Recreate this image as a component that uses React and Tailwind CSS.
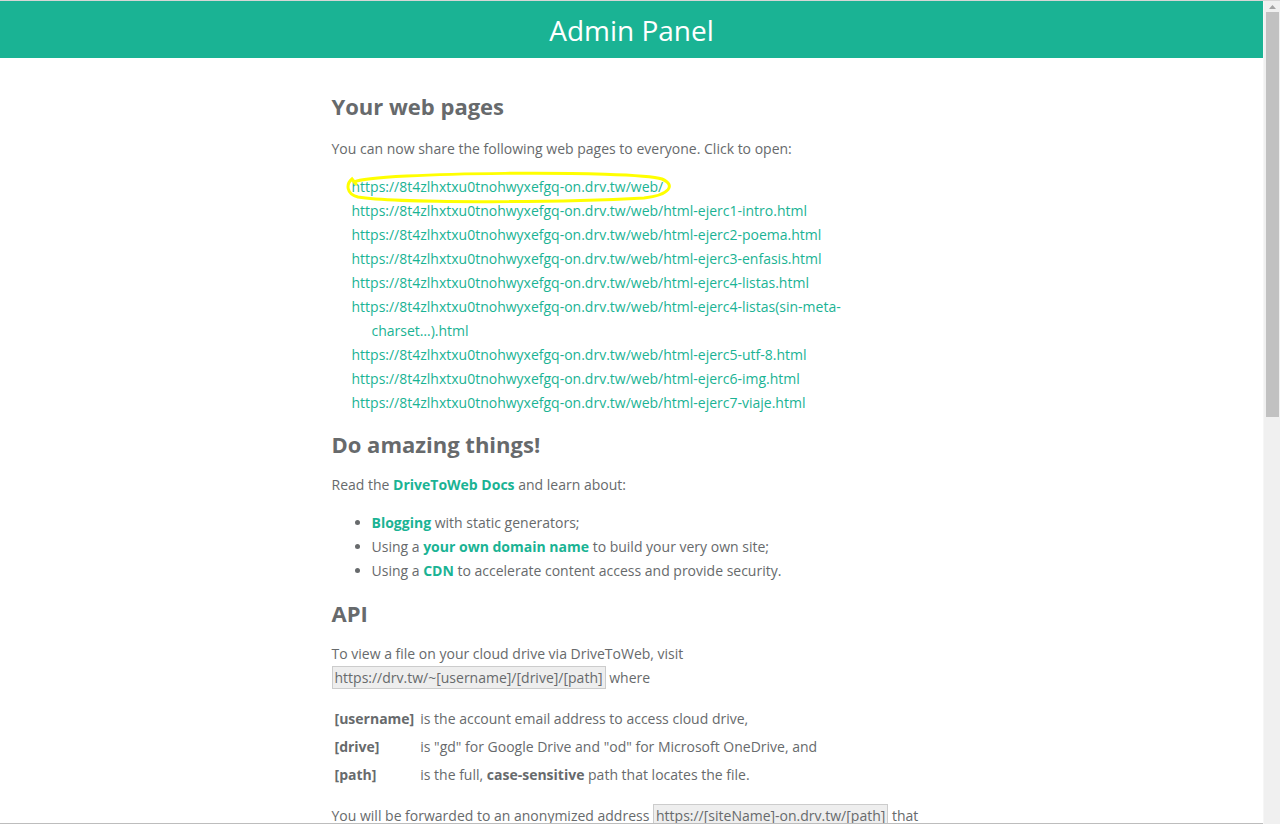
const links = [
  "https://8t4zlhxtxu0tnohwyxefgq-on.drv.tw/web/",
  "https://8t4zlhxtxu0tnohwyxefgq-on.drv.tw/web/html-ejerc1-intro.html",
  "https://8t4zlhxtxu0tnohwyxefgq-on.drv.tw/web/html-ejerc2-poema.html",
  "https://8t4zlhxtxu0tnohwyxefgq-on.drv.tw/web/html-ejerc3-enfasis.html",
  "https://8t4zlhxtxu0tnohwyxefgq-on.drv.tw/web/html-ejerc4-listas.html",
  "https://8t4zlhxtxu0tnohwyxefgq-on.drv.tw/web/html-ejerc4-listas(sin-meta-charset…).html",
  "https://8t4zlhxtxu0tnohwyxefgq-on.drv.tw/web/html-ejerc5-utf-8.html",
  "https://8t4zlhxtxu0tnohwyxefgq-on.drv.tw/web/html-ejerc6-img.html",
  "https://8t4zlhxtxu0tnohwyxefgq-on.drv.tw/web/html-ejerc7-viaje.html",
];

function Code({ children }) {
  return (
    <span className="whitespace-nowrap bg-[#eeeeee] border border-[#cccccc] px-[2px] py-px">{children}</span>
  );
}

export default function App() {
  return (
    <div className="h-[824px] flex overflow-hidden bg-white border-t border-[#d6d6d6] font-['Open_Sans',sans-serif] text-[14px] leading-[24px] text-[#676a6c]">
      {/* Page */}
      <div className="flex-1 flex flex-col overflow-hidden border-b border-[#bdbdbd]">
        <header className="h-[57px] shrink-0 flex items-center justify-center bg-[#1ab394]">
          <h1 className="text-[28px] text-white">Admin Panel</h1>
        </header>

        <main className="w-[600px] mx-auto">
          <h2 className="mt-[36px] text-[22px] leading-[24px] font-bold">Your web pages</h2>
          <p className="mt-[19px]">You can now share the following web pages to everyone. Click to open:</p>
          <ul className="mt-[14px] pl-10">
            {links.map((l, i) => (
              <li key={l} className="relative indent-[-20px]">
                <a className="text-[#1ab394]">{l}</a>
                {i === 0 && (
                  <svg
                    className="absolute left-[-28px] top-[-5px] pointer-events-none"
                    width="332"
                    height="34"
                    viewBox="0 0 332 34"
                  >
                    <path
                      d="M10 12 C 30 2, 290 0, 318 9 C 332 15, 326 25, 300 28 C 210 33, 50 33, 14 27 C 2 24, 2 14, 8 9 L 12 14"
                      fill="none"
                      stroke="#ffff00"
                      strokeWidth="3"
                      strokeLinecap="round"
                    />
                  </svg>
                )}
              </li>
            ))}
          </ul>

          <h2 className="mt-[17px] text-[22px] leading-[24px] font-bold">Do amazing things!</h2>
          <p className="mt-[17px]">
            Read the <a className="font-bold text-[#1ab394]">DriveToWeb Docs</a> and learn about:
          </p>
          <ul className="mt-[14px] pl-10 list-disc">
            <li>
              <a className="font-bold text-[#1ab394]">Blogging</a> with static generators;
            </li>
            <li>
              Using a <a className="font-bold text-[#1ab394]">your own domain name</a> to build your very own site;
            </li>
            <li>
              Using a <a className="font-bold text-[#1ab394]">CDN</a> to accelerate content access and provide security.
            </li>
          </ul>

          <h2 className="mt-[18px] text-[22px] leading-[24px] font-bold">API</h2>
          <p className="mt-[17px]">
            To view a file on your cloud drive via DriveToWeb, visit{" "}
            <Code>https://drv.tw/~[username]/[drive]/[path]</Code> where
          </p>
          <table className="mt-[15px]">
            <tbody>
              <tr>
                <td className="px-[3px] py-[2px] font-bold align-top">[username]</td>
                <td className="px-[3px] py-[2px]">is the account email address to access cloud drive,</td>
              </tr>
              <tr>
                <td className="px-[3px] py-[2px] font-bold align-top">[drive]</td>
                <td className="px-[3px] py-[2px]">is "gd" for Google Drive and "od" for Microsoft OneDrive, and</td>
              </tr>
              <tr>
                <td className="px-[3px] py-[2px] font-bold align-top">[path]</td>
                <td className="px-[3px] py-[2px]">
                  is the full, <b>case-sensitive</b> path that locates the file.
                </td>
              </tr>
            </tbody>
          </table>
          <p className="mt-[15px]">
            You will be forwarded to an anonymized address <Code>https://[siteName]-on.drv.tw/[path]</Code> that
            hides your account information.
          </p>
        </main>
      </div>

      {/* Scrollbar */}
      <div className="w-[17px] shrink-0 flex flex-col items-center bg-[#f0f0f0] border-l border-[#f6f6f6]">
        <div className="h-[11px] flex items-center justify-center">
          <svg width="7" height="4" viewBox="0 0 7 4">
            <path d="M3.5 0 L7 4 L0 4 Z" fill="#a3a3a3" />
          </svg>
        </div>
        <div className="w-[13px] h-[405px] bg-[#c1c1c1]" />
      </div>
    </div>
  );
}
